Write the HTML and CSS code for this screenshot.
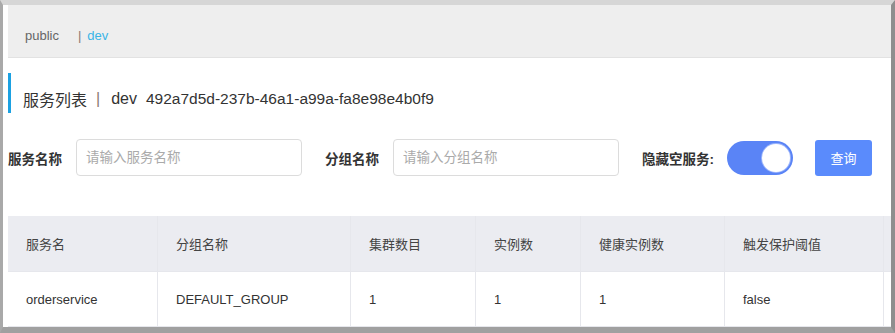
FILE: index.html
```html
<!DOCTYPE html>
<html lang="zh-CN">
<head>
    <meta charset="UTF-8">
    <meta name="viewport" content="width=device-width, initial-scale=1.0">
    <title>服务列表</title>
    <link rel="stylesheet" href="styles.css">
</head>
<body>
    <div class="frame">
        <div class="page">
            <div class="ns-bar">
                <span class="ns-item">public</span>
                <span class="ns-sep">|</span>
                <span class="ns-item active">dev</span>
            </div>

            <div class="title">
                <span>服务列表</span>
                <span class="title-sep">|</span>
                <span>dev</span>
                <span class="ns-id">492a7d5d-237b-46a1-a99a-fa8e98e4b0f9</span>
            </div>

            <div class="filters">
                <label class="filter-label">服务名称</label>
                <input type="text" class="filter-input" placeholder="请输入服务名称">
                <label class="filter-label">分组名称</label>
                <input type="text" class="filter-input" placeholder="请输入分组名称">
                <label class="filter-label hide-label">隐藏空服务:</label>
                <div class="switch"><div class="knob"></div></div>
                <button class="query-button">查询</button>
            </div>

            <table class="service-table">
                <thead>
                    <tr>
                        <th class="col-name">服务名</th>
                        <th class="col-group">分组名称</th>
                        <th class="col-cluster">集群数目</th>
                        <th class="col-inst">实例数</th>
                        <th class="col-healthy">健康实例数</th>
                        <th class="col-threshold">触发保护阈值</th>
                        <th class="col-op"></th>
                    </tr>
                </thead>
                <tbody>
                    <tr>
                        <td>orderservice</td>
                        <td>DEFAULT_GROUP</td>
                        <td>1</td>
                        <td>1</td>
                        <td>1</td>
                        <td>false</td>
                        <td></td>
                    </tr>
                </tbody>
            </table>
        </div>
    </div>
</body>
</html>
```

FILE: styles.css
```css
        body {
            font-family: "Liberation Sans", "Noto Sans CJK SC", sans-serif;
            background-color: #fff;
            margin: 0;
            padding: 0;
            color: #333;
        }
        .frame {
            width: 895px;
            height: 333px;
            box-sizing: border-box;
            border-top: 5px solid #d6d6d6;
            border-left: 3px solid #a9a9a9;
            border-right: 4px solid #8e8e8e;
            border-bottom: 6px solid #a0a0a0;
            background: #fff;
            overflow: hidden;
        }
        .page {
            padding-left: 5px;
        }
        .ns-bar {
            height: 53px;
            box-sizing: border-box;
            background: #eeeeee;
            border-bottom: 1px solid #e2e2e2;
            display: flex;
            align-items: center;
            padding: 8px 0 0 17px;
            font-size: 13px;
        }
        .ns-item {
            color: #666;
        }
        .ns-item.active {
            color: #3ab5e6;
        }
        .ns-sep {
            color: #8a7a70;
            margin: 0 6px 0 19px;
        }
        .title {
            margin-top: 15px;
            height: 40px;
            box-sizing: border-box;
            border-left: 3px solid #1ba1e2;
            display: flex;
            align-items: center;
            padding: 12px 0 0 12px;
            font-size: 16px;
            color: #333;
        }
        .title-sep {
            color: #8a7a70;
            margin: 0 11px 0 9px;
        }
        .ns-id {
            margin-left: 9px;
            font-size: 15.5px;
        }
        .filters {
            display: flex;
            align-items: center;
            margin-top: 26px;
            height: 37px;
        }
        .filter-label {
            font-size: 13.5px;
            font-weight: bold;
            color: #333;
            margin-right: 14px;
        }
        .hide-label {
            margin-right: 13px;
        }
        .filter-input {
            width: 226px;
            height: 37px;
            box-sizing: border-box;
            border: 1px solid #dcdcdc;
            border-radius: 4px;
            padding: 0 9px;
            font-family: inherit;
            font-size: 13.5px;
            margin-right: 23px;
        }
        .filter-input::placeholder {
            color: #aaa;
        }
        .switch {
            width: 66px;
            height: 34px;
            border-radius: 17px;
            background: #5a84f6;
            display: flex;
            align-items: center;
            justify-content: flex-end;
            padding-right: 3px;
            box-sizing: border-box;
            margin-right: 22px;
        }
        .knob {
            width: 28px;
            height: 28px;
            border-radius: 50%;
            background: #fff;
            box-shadow: 0 0 0 1px #9db6fb;
        }
        .query-button {
            width: 57px;
            height: 36px;
            background: #5a8bfc;
            color: #fff;
            border: none;
            border-radius: 3px;
            font-family: inherit;
            font-size: 13px;
            cursor: pointer;
        }
        .service-table {
            margin-top: 40px;
            border-collapse: collapse;
            table-layout: fixed;
            width: 940px;
            font-size: 13px;
        }
        .service-table th, .service-table td {
            text-align: left;
            padding: 0 0 0 18px;
            border: 1px solid #e6e7ec;
            border-top: none;
        }
        .service-table th:first-child, .service-table td:first-child {
            border-left: none;
        }
        .service-table th {
            height: 55px;
            background: #ebecf1;
            font-weight: normal;
            color: #444;
        }
        .service-table td {
            height: 54px;
            color: #333;
        }
        .col-name { width: 131px; }
        .col-group { width: 174px; }
        .col-cluster { width: 106px; }
        .col-inst { width: 86px; }
        .col-healthy { width: 125px; }
        .col-threshold { width: 140px; }
        .col-op { width: 100px; }
```
